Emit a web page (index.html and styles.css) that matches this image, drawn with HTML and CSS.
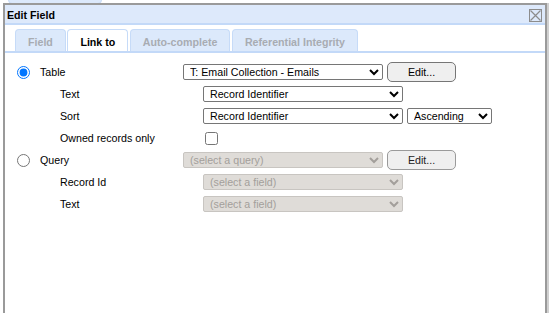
FILE: index.html
```html
<!DOCTYPE html>
<html>
<head>
<meta charset="utf-8">
<link rel="stylesheet" href="styles.css">
</head>
<body>
<div class="bg-tab">Maintenances</div>
<div class="dialog">
  <div class="titlebar">
    <span class="title">Edit Field</span>
    <svg class="close" width="13" height="13" viewBox="0 0 13 13">
      <rect x="0.5" y="0.5" width="12" height="12" fill="none" stroke="#8c8c8c"/>
      <path d="M1.5 1.5 L11.5 11.5 M11.5 1.5 L1.5 11.5" stroke="#8c8c8c" stroke-width="1.2"/>
    </svg>
  </div>
  <div class="tabs">
    <div class="tab">Field</div>
    <div class="tab active">Link to</div>
    <div class="tab">Auto-complete</div>
    <div class="tab">Referential Integrity</div>
  </div>
  <div class="content">
    <div class="row main">
      <span class="lead"><input type="radio" name="src" checked></span>
      <span class="label">Table</span>
      <select class="sel"><option>T: Email Collection - Emails</option></select>
      <button class="edit">Edit...</button>
    </div>
    <div class="row sub">
      <span class="label">Text</span>
      <select class="sel"><option>Record Identifier</option></select>
    </div>
    <div class="row sub">
      <span class="label">Sort</span>
      <select class="sel"><option>Record Identifier</option></select>
      <select class="sel-order"><option>Ascending</option></select>
    </div>
    <div class="row sub">
      <span class="label">Owned records only</span>
      <input type="checkbox" class="chk">
    </div>
    <div class="row main">
      <span class="lead"><input type="radio" name="src"></span>
      <span class="label">Query</span>
      <select class="sel" disabled><option>(select a query)</option></select>
      <button class="edit soft">Edit...</button>
    </div>
    <div class="row sub">
      <span class="label">Record Id</span>
      <select class="sel" disabled><option>(select a field)</option></select>
    </div>
    <div class="row sub">
      <span class="label">Text</span>
      <select class="sel" disabled><option>(select a field)</option></select>
    </div>
  </div>
</div>
</body>
</html>
```
FILE: styles.css
```css
html, body {
  margin: 0;
  padding: 0;
  background: #fff;
  font-family: "Liberation Sans", Arial, sans-serif;
  font-size: 10.67px;
  color: #000;
}
body {
  position: relative;
  width: 549px;
  height: 313px;
  overflow: hidden;
}
.bg-tab {
  position: absolute;
  left: 8px;
  top: -11px;
  width: 92px;
  height: 13px;
  background: #dce9fb;
  border: 1px solid #c6dbf8;
  border-radius: 4px;
  color: #c2c8d0;
  font-weight: bold;
  font-size: 10.67px;
  line-height: 13px;
  text-align: center;
}
.dialog {
  position: absolute;
  left: 3px;
  top: 3px;
  width: 540px;
  height: 330px;
  border: 2px solid #9a9a9a;
  background: #fff;
  box-shadow: 2px 0 0 #d0d0d0;
}
.titlebar {
  height: 18px;
  background: #dde9fb;
  border-bottom: 2px solid #c3d9f8;
  display: flex;
  align-items: center;
  justify-content: space-between;
  padding: 0 3px 0 2px;
}
.title {
  font-weight: bold;
  font-size: 10.67px;
  padding-top: 1px;
}
.close {
  display: block;
  margin-top: 2px;
}
.tabs {
  display: flex;
  gap: 1.5px;
  padding: 4px 0 0 10px;
  border-bottom: 2px solid #c3d9f8;
  height: 22px;
}
.tab {
  box-sizing: border-box;
  height: 22px;
  padding: 6px 12px 0;
  border: 1px solid #c6dbf8;
  border-bottom: none;
  border-radius: 4px 4px 0 0;
  background: #dce9fb;
  color: #a8acb2;
  font-weight: bold;
  line-height: 12px;
}
.tab.active {
  background: #fff;
  color: #000;
}
.content {
  padding-top: 8px;
  display: flex;
  flex-direction: column;
}
.row {
  display: flex;
  align-items: center;
  height: 22px;
}
.row.sub {
  padding-left: 55px;
}
.lead {
  width: 35px;
  display: flex;
  align-items: center;
}
.lead input {
  margin: 0 0 0 12px;
  width: 13px;
  height: 13px;
}
.label {
  width: 143px;
  flex: none;
}
select {
  font-family: "Liberation Sans", Arial, sans-serif;
  font-size: 10.67px;
  height: 16px;
  padding: 0 0 0 2px;
  margin: 0;
  color: #000;
  border: 1px solid #767676;
  border-radius: 2px;
  background: #fff;
}
.sel {
  width: 200px;
}
.sel-order {
  width: 85px;
  margin-left: 4px;
}
select:disabled {
  background: #dfdcd8;
  color: #a39f9b;
  border-color: #c8c5c1;
  opacity: 1;
}
.edit {
  margin-left: 4px;
  width: 69px;
  height: 20px;
  padding: 0;
  font-family: "Liberation Sans", Arial, sans-serif;
  font-size: 10.67px;
  color: #000;
  background: #efefef;
  border: 1px solid #767676;
  border-radius: 5px;
}
.edit.soft {
  border-color: #9a9a9a;
  color: #222;
}
.chk {
  margin: 0 0 0 2px;
  width: 13px;
  height: 13px;
}
```
